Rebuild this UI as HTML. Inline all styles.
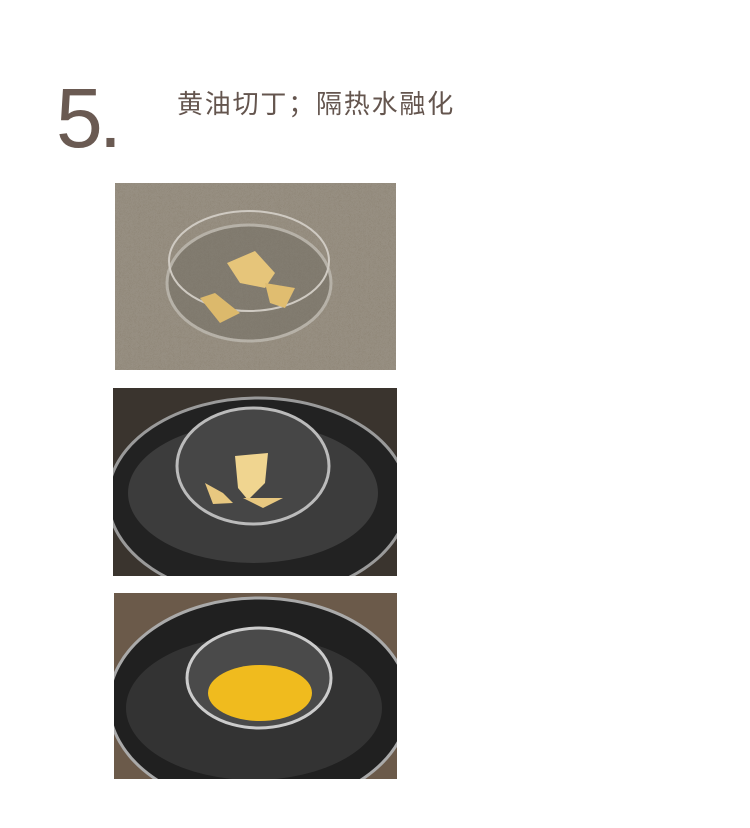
<!DOCTYPE html>
<html><head><meta charset="utf-8"><style>
body{margin:0;width:750px;height:828px;background:#fff;position:relative;overflow:hidden}
.n{position:absolute;left:56px;top:70px;font:84px "Liberation Sans",sans-serif;color:#6a5a52;letter-spacing:-4px}
.t{position:absolute;left:177px;top:84px;font:26px "Liberation Sans","Noto Sans CJK SC",sans-serif;color:#64554e;letter-spacing:1.8px}
svg{position:absolute}
</style></head><body>
<div class="n">5.</div>
<div class="t">黄油切丁；隔热水融化</div>
<svg style="left:115px;top:183px" width="281" height="187">
<defs><filter id="f"><feTurbulence baseFrequency="0.9" numOctaves="2"/><feColorMatrix values="0 0 0 0 0.35 0 0 0 0 0.32 0 0 0 0 0.27 0 0 0 -2.5 1.4"/></filter></defs>
<rect width="281" height="187" fill="#8f8677"/>
<rect width="281" height="187" filter="url(#f)" opacity=".5"/>
<ellipse cx="134" cy="100" rx="82" ry="58" fill="#6e6a60" opacity=".5" stroke="#d8d6d0" stroke-width="3"/>
<ellipse cx="134" cy="78" rx="80" ry="50" fill="none" stroke="#cfcac2" stroke-width="2"/>
<path d="M112 80 L140 68 L160 90 L150 105 L125 100Z" fill="#e6c57a"/>
<path d="M150 100 L180 105 L170 125 L155 120Z" fill="#e0bd70"/>
<path d="M85 115 L100 110 L125 130 L105 140Z" fill="#dcb96c"/>
</svg>
<svg style="left:113px;top:388px" width="284" height="188">
<rect width="284" height="188" fill="#3a342e"/>
<ellipse cx="145" cy="110" rx="150" ry="100" fill="#222" stroke="#9a9a9a" stroke-width="3"/>
<ellipse cx="140" cy="105" rx="125" ry="70" fill="#3c3c3c"/>
<ellipse cx="140" cy="78" rx="76" ry="58" fill="#464646" stroke="#bbb" stroke-width="3"/>
<path d="M122 68 L155 65 L152 95 L135 112 L125 100Z" fill="#f0d590"/>
<path d="M92 95 L110 105 L120 115 L100 116Z" fill="#e8c880"/>
<path d="M130 110 L170 110 L150 120Z" fill="#e8c880"/>
</svg>
<svg style="left:114px;top:593px" width="283" height="186">
<rect width="283" height="186" fill="#6b5a4a"/>
<ellipse cx="145" cy="110" rx="150" ry="105" fill="#202020" stroke="#aaa" stroke-width="3"/>
<ellipse cx="140" cy="115" rx="128" ry="72" fill="#333"/>
<ellipse cx="145" cy="85" rx="72" ry="50" fill="#4a4a4a" stroke="#ccc" stroke-width="3"/>
<ellipse cx="146" cy="100" rx="52" ry="28" fill="#f0bb1e"/>
</svg>
</body></html>
